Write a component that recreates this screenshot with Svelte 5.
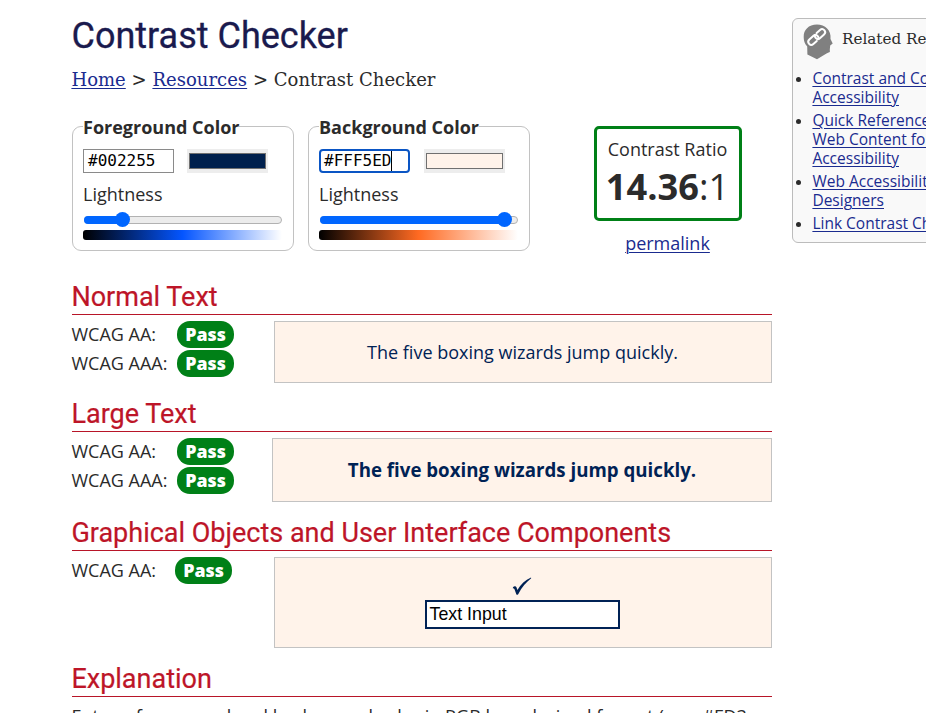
<script>
  const pickers = [
    { title: 'Foreground Color', hex: '#002255', color: '#00204d', value: 38, kind: 'fg', focused: false },
    { title: 'Background Color', hex: '#FFF5ED', color: '#fff3ea', value: 184, kind: 'bg', focused: true }
  ];
  const related = [
    ['Contrast and Color', 'Accessibility'],
    ['Quick Reference:', 'Web Content for', 'Accessibility'],
    ['Web Accessibility for', 'Designers'],
    ['Link Contrast Checker']
  ];
</script>

<div class="page">
  <main>
    <h1><span>Contrast Checker</span></h1>
    <nav><a href="#home">Home</a> &gt; <a href="#resources">Resources</a> &gt; Contrast Checker</nav>

    <div class="controls">
      {#each pickers as p}
        <section class="picker {p.kind}">
          <div class="legend"><span>{p.title}</span></div>
          <div class="fields">
            <div class="hex" class:focused={p.focused}>{p.hex}{#if p.focused}<i class="caret"></i>{/if}</div>
            <div class="swatch"><div style="background: {p.color}"></div></div>
          </div>
          <div class="lightness">Lightness</div>
          <div class="slider">
            <div class="fill" style="width: {p.value}px"></div>
            <div class="thumb" style="left: {p.value}px"></div>
          </div>
          <div class="gradient"></div>
        </section>
      {/each}
      <div class="result">
        <div class="ratio">
          <div class="caption">Contrast Ratio</div>
          <div class="number"><b>14.36</b>:1</div>
        </div>
        <a class="permalink" href="#permalink">permalink</a>
      </div>
    </div>

    <h2><span>Normal Text</span></h2>
    <div class="test normal">
      <div class="levels">
        <div><span>WCAG AA:</span><b>Pass</b></div>
        <div><span>WCAG AAA:</span><b>Pass</b></div>
      </div>
      <div class="sample"><span>The five boxing wizards jump quickly.</span></div>
    </div>

    <h2><span>Large Text</span></h2>
    <div class="test large">
      <div class="levels">
        <div><span>WCAG AA:</span><b>Pass</b></div>
        <div><span>WCAG AAA:</span><b>Pass</b></div>
      </div>
      <div class="sample"><span>The five boxing wizards jump quickly.</span></div>
    </div>

    <h2><span>Graphical Objects and User Interface Components</span></h2>
    <div class="test graphic">
      <div class="levels">
        <div><span>WCAG AA:</span><b>Pass</b></div>
      </div>
      <div class="sample">
        <svg width="20" height="19" viewBox="0 0 20 19"><path d="M1 10.2 C2.3 8.8 4.3 9.2 4.6 10.8 L5.4 13 C8.8 7.5 13.2 3 19 .6 L19.2 1.2 C14.2 5 9.8 10.3 6.2 17.2 Q5 18.2 4.3 17.2 L2.5 12.2 Q2.1 11.1 .8 11.2Z" fill="#025" /></svg>
        <div class="textinput">Text Input</div>
      </div>
    </div>

    <h2><span>Explanation</span></h2>
    <p>Enter a foreground and background color in RGB hexadecimal format (e.g., #FD3</p>
  </main>

  <aside>
    <div class="head">
      <svg width="31" height="36" viewBox="0 0 31 36">
        <path d="M14 .5 C5.5 .5 .5 6 .7 13 C.8 18 2.2 20 4.2 22.5 L4.4 30.5 L14 35.3 L23.5 29.5 L25.6 28.5 Q27.5 28 26.8 25.5 L27.2 21.5 L29.7 19.5 L27.5 15 C28.5 6 22 .5 14 .5Z" fill="#808080" />
        <g transform="translate(13.7 13) rotate(-42)" fill="none" stroke="#fff" stroke-width="2" stroke-linecap="round">
          <path d="M-2.6 3 H-7.2 A3 3 0 0 1 -7.2 -3 H-1.6 A3 3 0 0 1 1.4 0 A3 3 0 0 1 1 1.5" />
          <path d="M2.6 -3 H7.2 A3 3 0 0 1 7.2 3 H1.6 A3 3 0 0 1 -1.4 0 A3 3 0 0 1 -1 -1.5" />
        </g>
      </svg>
      <div class="title">Related Resources</div>
    </div>
    <ul>
      {#each related as lines}
        <li><a href="#related">{#each lines as line, i}{#if i}<br />{/if}{line}{/each}</a></li>
      {/each}
    </ul>
  </aside>
</div>

<style>
  :global(body) { margin: 0; background: #fff; overflow: hidden; }
  .page {
    display: flex; width: 926px; height: 713px; overflow: hidden; box-sizing: border-box;
    padding-left: 72px; color: #2b2b2b; font: 18px/28px "Open Sans", sans-serif;
  }
  main { width: 700px; flex: none; padding-top: 14px; }
  a { color: #1a2b8f; text-decoration: underline; text-decoration-thickness: 1px; text-underline-offset: 2px; }
  h1 { margin: 0 0 0 -0.5px; height: 52px; font: 400 36px/44px Roboto, sans-serif; color: #1a1a4e; -webkit-text-stroke: 0.3px #1a1a4e; }
  nav { height: 60px; margin-left: -0.6px; font: 18px/28px "DejaVu Serif", serif; letter-spacing: 0.03px; white-space: nowrap; }
  .controls { display: flex; height: 154px; }
  .picker {
    box-sizing: border-box; width: 222px; height: 125px; margin-right: 14px; padding-left: 10px;
    border: 1px solid #c2c2c2; border-radius: 9px; flex: none;
  }
  .legend { height: 22px; margin-top: -11px; font-weight: 700; white-space: nowrap; }
  .legend span { background: #fff; display: block; width: max-content; height: 22px; line-height: 22px; }
  .fields { display: flex; gap: 13px; height: 24px; margin-top: 11px; }
  .bg .fields { gap: 14px; }
  .hex {
    box-sizing: border-box; width: 91px; height: 24px; border: 1px solid #8a8a8a; padding-left: 4px;
    font: 16px/21px "DejaVu Sans Mono", monospace; color: #000; display: flex; background: #fff;
  }
  .hex.focused { border: 2px solid #0a55c4; border-radius: 4px; line-height: 19px; padding-left: 3px; }
  .caret { width: 1px; height: 20px; background: #000; }
  .swatch { box-sizing: border-box; width: 81px; height: 24px; background: #ededed; padding: 4px 2px; }
  .swatch div { box-sizing: border-box; height: 16px; border: 1px solid #707070; }
  .lightness { height: 28px; line-height: 27px; margin-top: 8px; }
  .slider {
    position: relative; box-sizing: border-box; width: 198px; height: 8px; margin: 7px 0 0 1px;
    border: 1px solid #b2b2b2; border-radius: 4px; background: #ececec;
  }
  .fill { height: 8px; margin: -1px; border-radius: 4px; background: #0066ff; }
  .thumb { position: absolute; top: -5px; width: 15px; height: 15px; margin-left: -8.5px; border-radius: 50%; background: #0066ff; }
  .gradient { width: 199px; height: 10px; margin-top: 6px; border-radius: 3px; }
  .fg .gradient { background: linear-gradient(to right, #000, #0455ff 50%, #fff); }
  .bg .gradient { background: linear-gradient(to right, #000, #ff6a22 50%, #fff); }
  .result { width: 148px; margin-left: 50px; flex: none; text-align: center; }
  .ratio { box-sizing: border-box; height: 95px; border: 3px solid #008017; border-radius: 5px; padding-top: 6px; white-space: nowrap; }
  .caption { height: 28px; margin-left: -1px; }
  .number { font-size: 36.2px; line-height: 46px; margin-left: -1px; }
  .permalink { display: block; margin: 8px 0 0 -1px; line-height: 28px; }
  h2 {
    margin: 0; box-sizing: border-box; height: 35px; border-bottom: 1px solid #b81528;
    font: 400 27px/34px Roboto, sans-serif; color: #bd1528; white-space: nowrap; -webkit-text-stroke: 0.2px #bd1528;
  }
  h2 span { margin-left: -0.6px; }
  .test { display: flex; justify-content: space-between; padding-top: 6px; }
  .levels > div { display: flex; height: 29px; line-height: 27px; white-space: nowrap; }
  .levels span { width: 105.5px; margin-left: -0.5px; }
  .graphic .levels span { width: 103.5px; }
  .levels b { width: 57px; height: 27px; border-radius: 13px; background: #008017; color: #fff; font-size: 17.8px; font-weight: 800; text-align: center; }
  .sample {
    box-sizing: border-box; width: 498px; border: 1px solid #c3c3c3; background: #fff3ea; color: #025;
    display: flex; align-items: center; justify-content: center; white-space: nowrap;
  }
  .normal { height: 76px; }
  .normal .sample { height: 62px; padding-right: 1px; }
  .large { height: 78px; }
  .large .sample { width: 500px; height: 64px; font-size: 18.7px; font-weight: 700; }
  .graphic { height: 105px; }
  .graphic .sample { height: 91px; flex-direction: column; justify-content: flex-start; padding: 19px 2px 0 0; }
  .graphic .sample svg { display: block; }
  .textinput {
    box-sizing: border-box; width: 195px; height: 29px; margin-top: 4px; padding-left: 3px;
    border: 2px solid #025; background: #fff; color: #000; font: 17.8px/25px "Liberation Sans", sans-serif;
  }
  p { margin: 5px 0 0 -0.5px; white-space: nowrap; letter-spacing: 0.01px; }
  aside {
    box-sizing: border-box; flex: none; width: 210px; height: 225px; margin: 18px 0 0 20px;
    border: 1px solid #bcbcbc; border-radius: 6px; background: #f9f9f9;
  }
  .head { display: flex; padding: 5px 0 0 10px; height: 45px; }
  .head svg { flex: none; }
  .title { margin-left: 8px; font: 15.2px/30px "DejaVu Serif", serif; white-space: nowrap; }
  ul { margin: 0; padding: 0 0 0 19.4px; list-style: none; font-size: 15.5px; line-height: 19px; }
  li { margin-bottom: 4px; position: relative; white-space: nowrap; }
  li::before { content: ""; position: absolute; left: -16.5px; top: 8px; width: 5px; height: 5px; border-radius: 50%; background: #2b2b2b; }
</style>
